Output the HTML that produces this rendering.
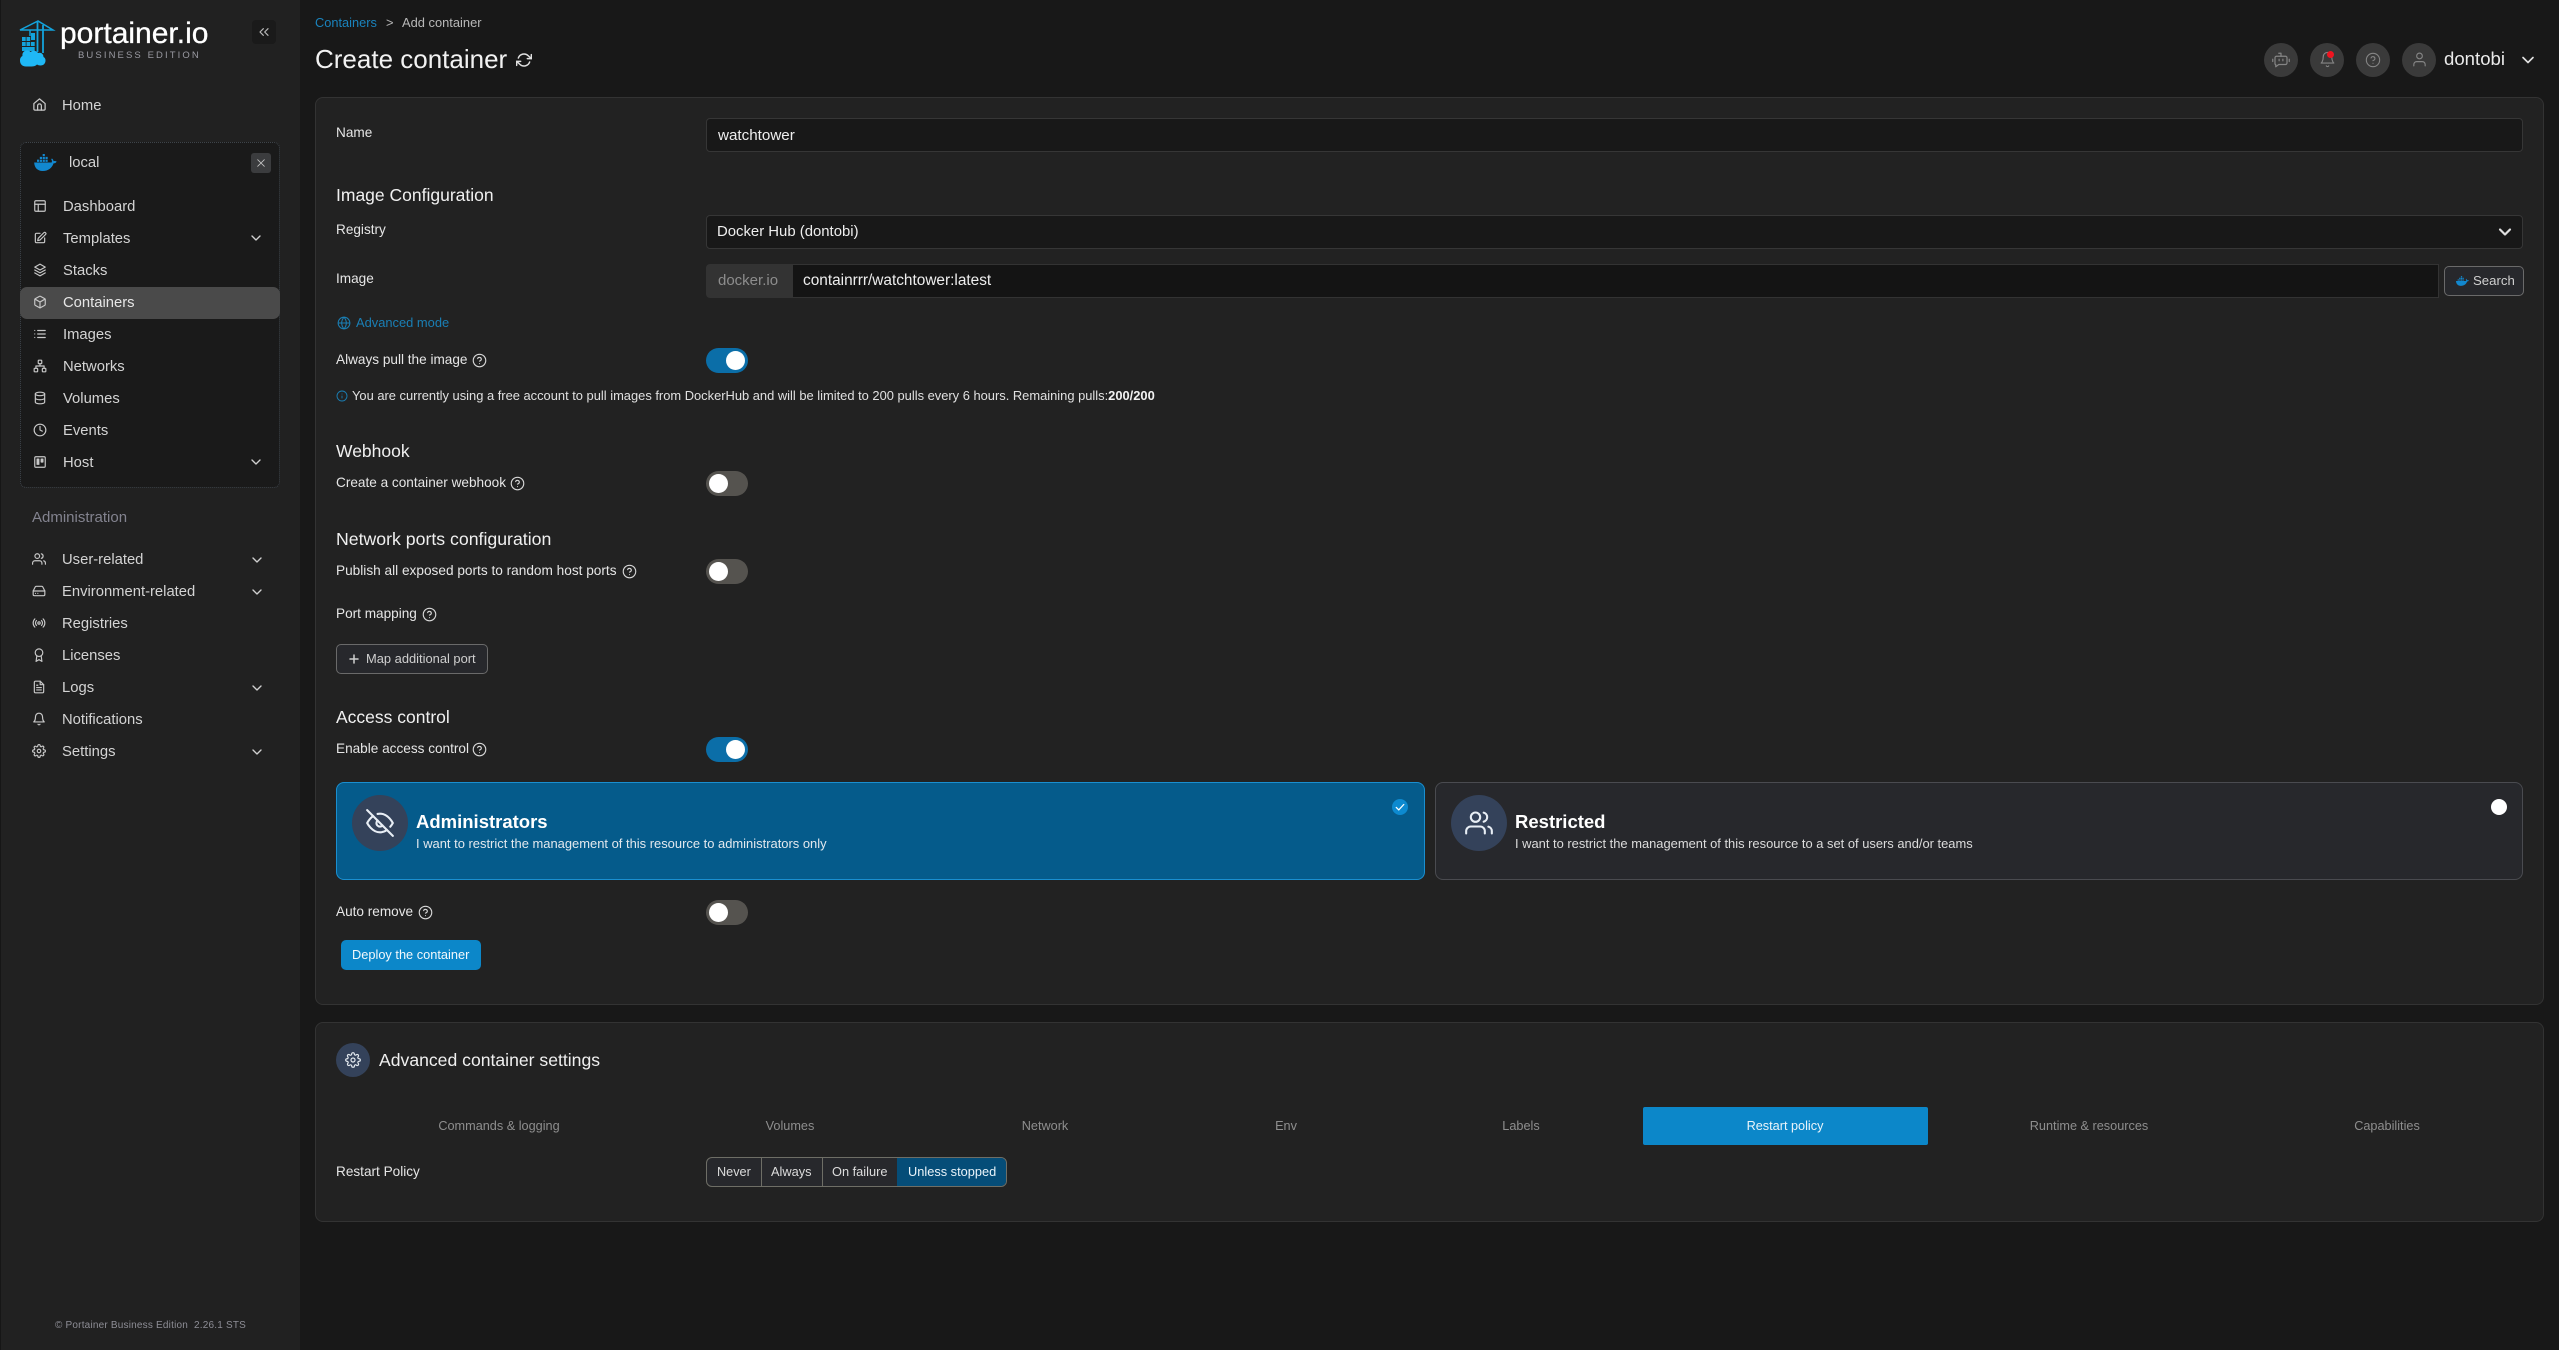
<!DOCTYPE html>
<html lang="en"><head><meta charset="utf-8"><title>Create container</title>
<style>
*{box-sizing:border-box;margin:0;padding:0}
html,body{width:2559px;height:1350px;overflow:hidden;background:#181818;font-family:"Liberation Sans",sans-serif;color:#e4e4e4}
.t{position:absolute;white-space:nowrap;line-height:20px;font-size:14px}
.b{position:absolute}
svg.i{position:absolute;fill:none;stroke:currentColor;stroke-width:2;stroke-linecap:round;stroke-linejoin:round}
.n{font-size:14.8px;color:#d4d4d4;margin-top:1px}
.ic{color:#c8c8c8}
.l{font-size:13.6px;color:#e6e6e6}
.h{font-size:17.5px;color:#f0f0f0}
.tg{position:absolute;width:42px;height:25px;border-radius:13px;background:#55534f;left:706px}
.tg:after{content:"";position:absolute;width:19px;height:19px;border-radius:50%;background:#fff;left:3px;top:3px}
.tg.on{background:#0b6ea8}.tg.on:after{left:20px}
.inp{position:absolute;background:#181818;border:1px solid #363636;border-radius:4px}
.tab{font-size:12.7px;color:#8e8e8e;transform:translateX(-50%)}
.c{position:absolute;border-radius:50%}
</style></head><body>
<svg width="0" height="0" style="position:absolute"><defs>
<symbol id="home" viewBox="0 0 24 24"><path d="M3 10.5L12 3l9 7.5V19a2 2 0 0 1-2 2H5a2 2 0 0 1-2-2z"/><path d="M9 21v-7a3 3 0 0 1 6 0v7"/></symbol>
<symbol id="layout" viewBox="0 0 24 24"><rect x="3" y="3" width="18" height="18" rx="2"/><path d="M3 9h18M9 21V9"/></symbol>
<symbol id="edit" viewBox="0 0 24 24"><path d="M12 4H6a2 2 0 0 0-2 2v12a2 2 0 0 0 2 2h12a2 2 0 0 0 2-2v-6"/><path d="M18.5 3a2.1 2.1 0 0 1 3 3L12 15.500l-4 1 1-4z"/></symbol>
<symbol id="layers" viewBox="0 0 24 24"><path d="M12 2L3 7l9 5 9-5z"/><path d="M3 12l9 5 9-5M3 17l9 5 9-5"/></symbol>
<symbol id="box" viewBox="0 0 24 24"><path d="M21 16V8a2 2 0 0 0-1-1.730l-7-4a2 2 0 0 0-2 0l-7 4A2 2 0 0 0 3 8v8a2 2 0 0 0 1 1.730l7 4a2 2 0 0 0 2 0l7-4A2 2 0 0 0 21 16z"/><path d="M3.270 6.960L12 12.010l8.730-5.050M12 22.080V12"/></symbol>
<symbol id="list" viewBox="0 0 24 24"><path d="M8 6h13M8 12h13M8 18h13M3 6h.01M3 12h.01M3 18h.01"/></symbol>
<symbol id="net" viewBox="0 0 24 24"><rect x="9" y="2" width="6" height="6" rx="1"/><rect x="2" y="16" width="6" height="6" rx="1"/><rect x="16" y="16" width="6" height="6" rx="1"/><path d="M12 8v4M5 16v-4h14v4"/></symbol>
<symbol id="db" viewBox="0 0 24 24"><ellipse cx="12" cy="5" rx="8" ry="3"/><path d="M20 12c0 1.660-3.600 3-8 3s-8-1.340-8-3M4 5v14c0 1.660 3.600 3 8 3s8-1.340 8-3V5"/></symbol>
<symbol id="clock" viewBox="0 0 24 24"><circle cx="12" cy="12" r="10"/><path d="M12 6v6l4 2"/></symbol>
<symbol id="trello" viewBox="0 0 24 24"><rect x="3" y="3" width="18" height="18" rx="2"/><rect x="7" y="7" width="3" height="9" fill="currentColor"/><rect x="14" y="7" width="3" height="5" fill="currentColor"/></symbol>
<symbol id="users" viewBox="0 0 24 24"><path d="M17 21v-2a4 4 0 0 0-4-4H5a4 4 0 0 0-4 4v2"/><circle cx="9" cy="7" r="4"/><path d="M23 21v-2a4 4 0 0 0-3-3.870M16 3.130a4 4 0 0 1 0 7.750"/></symbol>
<symbol id="drive" viewBox="0 0 24 24"><path d="M22 12H2"/><path d="M5.450 5.110L2 12v6a2 2 0 0 0 2 2h16a2 2 0 0 0 2-2v-6l-3.450-6.890A2 2 0 0 0 16.760 4H7.240a2 2 0 0 0-1.790 1.110z"/><path d="M6 16h.01M10 16h.01"/></symbol>
<symbol id="radio" viewBox="0 0 24 24"><circle cx="12" cy="12" r="2"/><path d="M16.240 7.760a6 6 0 0 1 0 8.490M7.760 16.240a6 6 0 0 1 0-8.490M19.070 4.930a10 10 0 0 1 0 14.140M4.930 19.070a10 10 0 0 1 0-14.140"/></symbol>
<symbol id="award" viewBox="0 0 24 24"><circle cx="12" cy="8" r="6.500"/><path d="M8.210 13.890L7 23l5-3 5 3-1.210-9.120"/></symbol>
<symbol id="file" viewBox="0 0 24 24"><path d="M14 2H6a2 2 0 0 0-2 2v16a2 2 0 0 0 2 2h12a2 2 0 0 0 2-2V8z"/><path d="M14 2v6h6M16 13H8M16 17H8M10 9H8"/></symbol>
<symbol id="bell" viewBox="0 0 24 24"><path d="M18 8A6 6 0 0 0 6 8c0 7-3 9-3 9h18s-3-2-3-9"/><path d="M13.730 21a2 2 0 0 1-3.460 0"/></symbol>
<symbol id="gear" viewBox="0 0 24 24"><circle cx="12" cy="12" r="3"/><path d="M19.400 15a1.650 1.650 0 0 0 .33 1.820l.06.06a2 2 0 0 1 0 2.830 2 2 0 0 1-2.830 0l-.06-.06a1.650 1.650 0 0 0-1.820-.33 1.650 1.650 0 0 0-1 1.510V21a2 2 0 0 1-2 2 2 2 0 0 1-2-2v-.09A1.650 1.650 0 0 0 9 19.400a1.650 1.650 0 0 0-1.820.33l-.06.06a2 2 0 0 1-2.830 0 2 2 0 0 1 0-2.830l.06-.06a1.650 1.650 0 0 0 .33-1.820 1.650 1.650 0 0 0-1.510-1H3a2 2 0 0 1-2-2 2 2 0 0 1 2-2h.09A1.650 1.650 0 0 0 4.600 9a1.650 1.650 0 0 0-.33-1.820l-.06-.06a2 2 0 0 1 0-2.830 2 2 0 0 1 2.830 0l.06.06a1.650 1.650 0 0 0 1.820.33H9a1.650 1.650 0 0 0 1-1.510V3a2 2 0 0 1 2-2 2 2 0 0 1 2 2v.09a1.650 1.650 0 0 0 1 1.510 1.650 1.650 0 0 0 1.820-.33l.06-.06a2 2 0 0 1 2.830 0 2 2 0 0 1 0 2.830l-.06.06a1.650 1.650 0 0 0-.33 1.820V9a1.650 1.650 0 0 0 1.510 1H21a2 2 0 0 1 2 2 2 2 0 0 1-2 2h-.09a1.650 1.650 0 0 0-1.510 1z"/></symbol>
<symbol id="chev" viewBox="0 0 24 24"><path d="M6 9l6 6 6-6"/></symbol>
<symbol id="help" viewBox="0 0 24 24"><circle cx="12" cy="12" r="10"/><path d="M9.090 9a3 3 0 0 1 5.830 1c0 2-3 3-3 3M12 17h.01"/></symbol>
<symbol id="eyeoff" viewBox="0 0 24 24"><path d="M17.940 17.940A10.070 10.070 0 0 1 12 20c-7 0-11-8-11-8a18.450 18.450 0 0 1 5.060-5.940M9.900 4.240A9.120 9.120 0 0 1 12 4c7 0 11 8 11 8a18.500 18.500 0 0 1-2.160 3.190m-6.720-1.070a3 3 0 1 1-4.240-4.240"/><path d="M1 1l22 22"/></symbol>
<symbol id="refresh" viewBox="0 0 24 24"><path d="M23 4v6h-6M1 20v-6h6"/><path d="M3.510 9a9 9 0 0 1 14.850-3.360L23 10M1 14l4.640 4.360A9 9 0 0 0 20.490 15"/></symbol>
<symbol id="globe" viewBox="0 0 24 24"><circle cx="12" cy="12" r="10"/><path d="M2 12h20M12 2a15.300 15.300 0 0 1 4 10 15.300 15.300 0 0 1-4 10 15.300 15.300 0 0 1-4-10 15.300 15.300 0 0 1 4-10z"/></symbol>
<symbol id="user" viewBox="0 0 24 24"><path d="M20 21v-2a4 4 0 0 0-4-4H8a4 4 0 0 0-4 4v2"/><circle cx="12" cy="7" r="4"/></symbol>
<symbol id="bot" viewBox="0 0 24 24"><path d="M12 7V3H9"/><path d="M6 7h12a2 2 0 0 1 2 2v7a2 2 0 0 1-2 2H9l-4 3v-3a1 1 0 0 1-1-1V9a2 2 0 0 1 2-2z"/><path d="M1 11v3M23 11v3M9.500 11v2M14.500 11v2"/></symbol>
<symbol id="info" viewBox="0 0 24 24"><circle cx="12" cy="12" r="10"/><path d="M12 16v-4M12 8h.01"/></symbol>
<symbol id="whale" viewBox="0 0 24 18"><path fill="currentColor" stroke="none" d="M0 9h18.500c.6-1.200.3-2.500-.5-3.500l.8-.7c1 .7 1.600 1.700 1.700 2.800 1-.4 2.300-.3 3.300.3-.6 1.400-1.900 2-3.300 2C19 14.500 15 18 9 18 3.500 18 .3 14.500 0 9z"/><path fill="currentColor" stroke="none" d="M3 6h2.300v2.300H3zM6 6h2.300v2.300H6zM9 6h2.300v2.300H9zM12 6h2.300v2.300H12zM6 3h2.300v2.300H6zM9 3h2.300v2.300H9zM12 3h2.300v2.300H12zM9 0h2.300v2.300H9z"/></symbol>
</defs></svg>

<!-- Sidebar -->
<div class="b" style="left:0;top:0;width:300px;height:1350px;background:#212121;border-left:1px solid #161616"></div>
<svg class="b" style="left:18px;top:18px" width="38" height="50" viewBox="0 0 38 50">
<g fill="none" stroke="#13a3dc"><path d="M2 12L20 3l15 9z" stroke-width="1.500"/><path d="M19.500 4v30M25 7v28" stroke-width="1.800"/><path d="M12 12v6" stroke-width="1.500"/></g>
<path fill="#13a3dc" d="M4 19h3.700v4H4zM8.500 19h3.700v4H8.500zM4 24h3.700v4H4zM8.500 24h3.700v4H8.500zM13 24h3.700v4H13zM4 29h12.700v4H4zM13 15h4v7h-4z"/>
<path fill="#1fb8f6" d="M8 48.500c-4 0-6-2.700-6-6 0-2.500 1-3.800 2.500-4.500-.5-2.500 1-5 3.500-5.500 2-.5 3.500 0 4.500 1.500 2-2 6-1.700 7.500 1 2.500-1 5.500.5 5.500 4 1.500.7 2 2 2 3.500 0 3-2 5-5 5-1.500 0-2.500-.5-3.500-1-1.500 1.500-3.500 2-5.500 2z"/></svg>
<div class="t" style="left:60px;top:16px;line-height:36px;font-size:30px;color:#fff;font-weight:normal;-webkit-text-stroke:.3px #fff">portainer.io</div>
<div class="t" style="left:78px;top:46px;font-size:9.500px;color:#9a9aa2;letter-spacing:2.100px">BUSINESS EDITION</div>
<div class="b" style="left:252px;top:20px;width:24px;height:24px;border-radius:4px;background:#1a1a1a"></div>
<svg class="i" style="left:256px;top:24px;color:#b8b8b8;stroke-width:1.800" width="16" height="16" viewBox="0 0 24 24"><path d="M11 17l-5-5 5-5M18 17l-5-5 5-5"/></svg>

<svg class="i ic" style="left:32px;top:97px" width="15" height="15"><use href="#home"/></svg>
<div class="t n" style="left:62px;top:95px">Home</div>

<div class="b" style="left:20px;top:142px;width:260px;height:346px;background:#1a1a1a;border:1px dotted #3e444a;border-radius:6px"></div>
<svg class="i" style="left:34px;top:154px;color:#1288cf" width="23" height="17"><use href="#whale"/></svg>
<div class="t n" style="left:69px;top:152px">local</div>
<div class="b" style="left:251px;top:153px;width:20px;height:20px;background:#3b3c3e;border-radius:3px"></div>
<svg class="i" style="left:256px;top:158px;color:#c2c2c2;stroke-width:2" width="10" height="10" viewBox="0 0 24 24"><path d="M4 4l16 16M20 4L4 20"/></svg>
<div class="b" style="left:20px;top:287px;width:260px;height:32px;background:#4a4a4a;border-radius:7px"></div>

<svg class="i ic" style="left:33px;top:199px" width="14" height="14"><use href="#layout"/></svg><div class="t n" style="left:63px;top:196px">Dashboard</div>
<svg class="i ic" style="left:33px;top:231px" width="14" height="14"><use href="#edit"/></svg><div class="t n" style="left:63px;top:228px">Templates</div>
<svg class="i" style="left:248px;top:230px;color:#d0d0d0" width="16" height="16"><use href="#chev"/></svg>
<svg class="i ic" style="left:33px;top:263px" width="14" height="14"><use href="#layers"/></svg><div class="t n" style="left:63px;top:260px">Stacks</div>
<svg class="i ic" style="left:33px;top:295px" width="14" height="14"><use href="#box"/></svg><div class="t n" style="left:63px;top:292px;color:#e6e6e6">Containers</div>
<svg class="i ic" style="left:33px;top:327px" width="14" height="14"><use href="#list"/></svg><div class="t n" style="left:63px;top:324px">Images</div>
<svg class="i ic" style="left:33px;top:359px" width="14" height="14"><use href="#net"/></svg><div class="t n" style="left:63px;top:356px">Networks</div>
<svg class="i ic" style="left:33px;top:391px" width="14" height="14"><use href="#db"/></svg><div class="t n" style="left:63px;top:388px">Volumes</div>
<svg class="i ic" style="left:33px;top:423px" width="14" height="14"><use href="#clock"/></svg><div class="t n" style="left:63px;top:420px">Events</div>
<svg class="i ic" style="left:33px;top:455px" width="14" height="14"><use href="#trello"/></svg><div class="t n" style="left:63px;top:452px">Host</div>
<svg class="i" style="left:248px;top:454px;color:#d0d0d0" width="16" height="16"><use href="#chev"/></svg>

<div class="t" style="left:32px;top:508px;font-size:15px;color:#83838f">Administration</div>
<svg class="i ic" style="left:32px;top:552px" width="14" height="14"><use href="#users"/></svg><div class="t n" style="left:62px;top:549px">User-related</div>
<svg class="i" style="left:249px;top:552px;color:#d0d0d0" width="16" height="16"><use href="#chev"/></svg>
<svg class="i ic" style="left:32px;top:584px" width="14" height="14"><use href="#drive"/></svg><div class="t n" style="left:62px;top:581px">Environment-related</div>
<svg class="i" style="left:249px;top:584px;color:#d0d0d0" width="16" height="16"><use href="#chev"/></svg>
<svg class="i ic" style="left:32px;top:616px" width="14" height="14"><use href="#radio"/></svg><div class="t n" style="left:62px;top:613px">Registries</div>
<svg class="i ic" style="left:32px;top:648px" width="14" height="14"><use href="#award"/></svg><div class="t n" style="left:62px;top:645px">Licenses</div>
<svg class="i ic" style="left:32px;top:680px" width="14" height="14"><use href="#file"/></svg><div class="t n" style="left:62px;top:677px">Logs</div>
<svg class="i" style="left:249px;top:680px;color:#d0d0d0" width="16" height="16"><use href="#chev"/></svg>
<svg class="i ic" style="left:32px;top:712px" width="14" height="14"><use href="#bell"/></svg><div class="t n" style="left:62px;top:709px">Notifications</div>
<svg class="i ic" style="left:32px;top:744px" width="14" height="14"><use href="#gear"/></svg><div class="t n" style="left:62px;top:741px">Settings</div>
<svg class="i" style="left:249px;top:744px;color:#d0d0d0" width="16" height="16"><use href="#chev"/></svg>
<div class="t" style="left:55px;top:1316px;font-size:10px;color:#8e8e96;letter-spacing:.2px">© Portainer Business Edition &nbsp;2.26.1 STS</div>

<!-- Header -->
<div class="t" style="left:315px;top:13px;font-size:12.800px;color:#1a83bd">Containers</div>
<div class="t" style="left:386px;top:13px;font-size:12.800px;color:#b8b8b8">&gt;</div>
<div class="t" style="left:402px;top:13px;font-size:12.900px;color:#b8b8b8">Add container</div>
<div class="t" style="left:315px;top:39px;font-size:26px;line-height:40px;color:#f2f2f2">Create container</div>
<svg class="i" style="left:516px;top:52px;color:#e0e0e0;stroke-width:2.200" width="16" height="16"><use href="#refresh"/></svg>

<div class="c" style="left:2264px;top:43px;width:34px;height:34px;background:#3a3a3a"></div>
<svg class="i" style="left:2272px;top:51px;color:#858585;stroke-width:1.600" width="18" height="18"><use href="#bot"/></svg>
<div class="c" style="left:2310px;top:43px;width:34px;height:34px;background:#3a3a3a"></div>
<svg class="i" style="left:2319px;top:51px;color:#858585;stroke-width:1.600" width="17" height="17"><use href="#bell"/></svg>
<div class="c" style="left:2327px;top:51px;width:7px;height:7px;background:#f01420"></div>
<div class="c" style="left:2356px;top:43px;width:34px;height:34px;background:#3a3a3a"></div>
<svg class="i" style="left:2365px;top:52px;color:#858585;stroke-width:1.600" width="16" height="16"><use href="#help"/></svg>
<div class="c" style="left:2402px;top:43px;width:34px;height:34px;background:#3a3a3a"></div>
<svg class="i" style="left:2411px;top:51px;color:#858585;stroke-width:1.600" width="17" height="17"><use href="#user"/></svg>
<div class="t" style="left:2444px;top:48px;font-size:18.600px;color:#eaeaea;line-height:22px">dontobi</div>
<svg class="i" style="left:2518px;top:50px;color:#e0e0e0" width="20" height="20"><use href="#chev"/></svg>

<!-- Card 1 -->
<div class="b" style="left:315px;top:97px;width:2229px;height:908px;background:#222;border:1px solid #333;border-radius:8px"></div>
<div class="t l" style="left:336px;top:123px">Name</div>
<div class="inp" style="left:706px;top:118px;width:1817px;height:34px"></div>
<div class="t" style="left:718px;top:126px;font-size:15.200px;color:#eee">watchtower</div>
<div class="t h" style="left:336px;top:185px">Image Configuration</div>
<div class="t l" style="left:336px;top:220px">Registry</div>
<div class="inp" style="left:706px;top:215px;width:1817px;height:34px"></div>
<div class="t" style="left:717px;top:222px;font-size:14.900px;color:#eee">Docker Hub (dontobi)</div>
<svg class="i" style="left:2495px;top:222px;color:#e0e0e0;stroke-width:2.600" width="20" height="20"><use href="#chev"/></svg>
<div class="t l" style="left:336px;top:269px">Image</div>
<div class="b" style="left:706px;top:264px;width:86px;height:34px;background:#333;border-radius:4px 0 0 4px"></div>
<div class="t" style="left:718px;top:271px;font-size:15px;color:#8d8d8d">docker.io</div>
<div class="b" style="left:792px;top:264px;width:1647px;height:34px;background:#141414;border:1px solid #333"></div>
<div class="t" style="left:803px;top:271px;font-size:15.400px;color:#eee">containrrr/watchtower:latest</div>
<div class="b" style="left:2444px;top:266px;width:80px;height:30px;background:#27282c;border:1px solid #6a6a6a;border-radius:5px"></div>
<svg class="i" style="left:2456px;top:276px;color:#1288cf" width="13" height="10"><use href="#whale"/></svg>
<div class="t" style="left:2473px;top:271px;font-size:13.200px;color:#cfcfcf">Search</div>
<svg class="i" style="left:337px;top:316px;color:#1a7fb5;stroke-width:1.800" width="14" height="14"><use href="#globe"/></svg>
<div class="t" style="left:356px;top:313px;font-size:12.900px;color:#1a7fb5">Advanced mode</div>
<div class="t l" style="left:336px;top:350px">Always pull the image</div>
<svg class="i" style="left:472px;top:353px;color:#d8d8d8;stroke-width:1.800" width="15" height="15"><use href="#help"/></svg>
<div class="tg on" style="top:348px"></div>
<svg class="i" style="left:336px;top:390px;color:#1a7fb5;stroke-width:1.800" width="12" height="12"><use href="#info"/></svg>
<div class="t" style="left:352px;top:386px;font-size:12.900px;color:#e0e0e0">You are currently using a free account to pull images from DockerHub and will be limited to 200 pulls every 6 hours. Remaining pulls:<b style="color:#f2f2f2">200/200</b></div>
<div class="t h" style="left:336px;top:441px">Webhook</div>
<div class="t l" style="left:336px;top:473px">Create a container webhook</div>
<svg class="i" style="left:510px;top:476px;color:#d8d8d8;stroke-width:1.800" width="15" height="15"><use href="#help"/></svg>
<div class="tg" style="top:471px"></div>
<div class="t h" style="left:336px;top:529px;font-size:17.700px">Network ports configuration</div>
<div class="t l" style="left:336px;top:561px;font-size:13.650px">Publish all exposed ports to random host ports</div>
<svg class="i" style="left:622px;top:564px;color:#d8d8d8;stroke-width:1.800" width="15" height="15"><use href="#help"/></svg>
<div class="tg" style="top:559px"></div>
<div class="t l" style="left:336px;top:604px">Port mapping</div>
<svg class="i" style="left:422px;top:607px;color:#d8d8d8;stroke-width:1.800" width="15" height="15"><use href="#help"/></svg>
<div class="b" style="left:336px;top:644px;width:152px;height:30px;background:#27282c;border:1px solid #6a6a6a;border-radius:5px"></div>
<svg class="i" style="left:347px;top:652px;color:#cfcfcf;stroke-width:1.500" width="14" height="14"><path d="M7 3v8M3 7h8"/></svg>
<div class="t" style="left:366px;top:649px;font-size:12.900px;color:#cfcfcf">Map additional port</div>

<div class="t h" style="left:336px;top:707px">Access control</div>
<div class="t l" style="left:336px;top:739px">Enable access control</div>
<svg class="i" style="left:472px;top:742px;color:#d8d8d8;stroke-width:1.800" width="15" height="15"><use href="#help"/></svg>
<div class="tg on" style="top:737px"></div>

<div class="b" style="left:336px;top:782px;width:1089px;height:98px;background:#055b8b;border:1px solid #1a8fd0;border-radius:8px"></div>
<div class="c" style="left:352px;top:795px;width:56px;height:56px;background:#34425a"></div>
<svg class="i" style="left:366px;top:809px;color:#e8eef5;stroke-width:1.800" width="28" height="28"><use href="#eyeoff"/></svg>
<div class="t" style="left:416px;top:812px;font-size:18.500px;font-weight:bold;color:#fff">Administrators</div>
<div class="t" style="left:416px;top:834px;font-size:12.950px;color:#e2e8ee">I want to restrict the management of this resource to administrators only</div>
<div class="c" style="left:1392px;top:799px;width:16px;height:16px;background:#0d8ad0"></div>
<svg class="i" style="left:1395px;top:802px;color:#fff;stroke-width:3" width="10" height="10" viewBox="0 0 24 24"><path d="M3 13l6 6L21 6"/></svg>

<div class="b" style="left:1435px;top:782px;width:1088px;height:98px;background:#27282c;border:1px solid #4a4b50;border-radius:8px"></div>
<div class="c" style="left:1451px;top:795px;width:56px;height:56px;background:#34425a"></div>
<svg class="i" style="left:1465px;top:809px;color:#e8eef5;stroke-width:1.800" width="28" height="28"><use href="#users"/></svg>
<div class="t" style="left:1515px;top:812px;font-size:18.500px;font-weight:bold;color:#fff">Restricted</div>
<div class="t" style="left:1515px;top:834px;font-size:12.920px;color:#dcdcdc">I want to restrict the management of this resource to a set of users and/or teams</div>
<div class="c" style="left:2491px;top:799px;width:16px;height:16px;background:#fff"></div>

<div class="t l" style="left:336px;top:902px">Auto remove</div>
<svg class="i" style="left:418px;top:905px;color:#d8d8d8;stroke-width:1.800" width="15" height="15"><use href="#help"/></svg>
<div class="tg" style="top:900px"></div>
<div class="b" style="left:341px;top:940px;width:140px;height:30px;background:#0c87c9;border-radius:5px"></div>
<div class="t" style="left:352px;top:945px;font-size:12.800px;color:#f2f8fc">Deploy the container</div>

<!-- Card 2 -->
<div class="b" style="left:315px;top:1022px;width:2229px;height:200px;background:#222;border:1px solid #333;border-radius:8px"></div>
<div class="c" style="left:336px;top:1043px;width:34px;height:34px;background:#34425a"></div>
<svg class="i" style="left:345px;top:1052px;color:#e2e8ee;stroke-width:1.800" width="16" height="16"><use href="#gear"/></svg>
<div class="t" style="left:379px;top:1050px;font-size:17.600px;color:#f0f0f0">Advanced container settings</div>
<div class="t tab" style="left:499px;top:1116px">Commands &amp; logging</div>
<div class="t tab" style="left:790px;top:1116px">Volumes</div>
<div class="t tab" style="left:1045px;top:1116px">Network</div>
<div class="t tab" style="left:1286px;top:1116px">Env</div>
<div class="t tab" style="left:1521px;top:1116px">Labels</div>
<div class="b" style="left:1643px;top:1107px;width:285px;height:38px;background:#0c87c9;border-radius:2px"></div>
<div class="t tab" style="left:1785px;top:1116px;color:#eaf4fa">Restart policy</div>
<div class="t tab" style="left:2089px;top:1116px">Runtime &amp; resources</div>
<div class="t tab" style="left:2387px;top:1116px">Capabilities</div>
<div class="t l" style="left:336px;top:1162px">Restart Policy</div>
<div class="b" style="left:706px;top:1157px;width:301px;height:30px;background:#27282c;border:1px solid #6e6e66;border-radius:6px;overflow:hidden">
<div class="b" style="left:54px;top:0;width:1px;height:28px;background:#6e6e66"></div>
<div class="b" style="left:115px;top:0;width:1px;height:28px;background:#6e6e66"></div>
<div class="b" style="left:190px;top:-1px;width:110px;height:30px;background:#054d78"></div></div>
<div class="t" style="left:717px;top:1162px;font-size:12.700px;color:#dcdcdc">Never</div>
<div class="t" style="left:771px;top:1162px;font-size:12.800px;color:#dcdcdc">Always</div>
<div class="t" style="left:832px;top:1162px;font-size:12.800px;color:#dcdcdc">On failure</div>
<div class="t" style="left:908px;top:1162px;font-size:12.800px;color:#eaf4fa">Unless stopped</div>
</body></html>
